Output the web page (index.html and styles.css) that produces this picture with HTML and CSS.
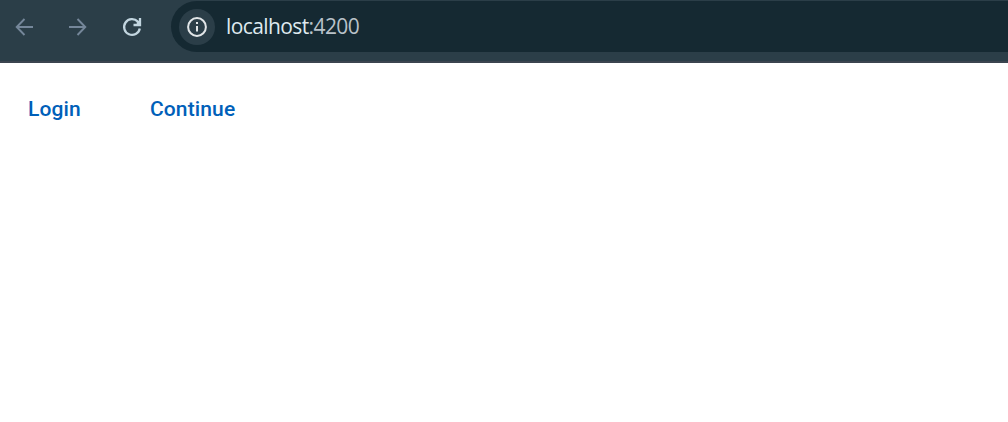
FILE: index.html
```html
<!DOCTYPE html>
<html lang="en">

<head>
    <meta charset="UTF-8">
    <meta name="viewport" content="width=device-width, initial-scale=1.0">
    <title>localhost:4200</title>
    <link rel="stylesheet" href="styles.css">
</head>

<body>
    <header class="toolbar">
        <nav class="nav">
            <svg class="icon arrow" viewBox="0 0 24 24">
                <path d="M21 12H4.9M12.5 4L4.7 12l7.8 8" />
            </svg>
            <svg class="icon arrow" viewBox="0 0 24 24">
                <path d="M3 12h16.1M11.5 4l7.8 8-7.8 8" />
            </svg>
            <svg class="icon reload" viewBox="0 0 24 24">
                <path d="M19.8 13.5A7.9 7.9 0 1 1 17.8 6.6L19.5 8.5" />
                <path d="M20 3v7h-6.5M17.2 7.2L19.5 9.5" />
            </svg>
        </nav>
        <div class="address">
            <span class="info">
                <svg class="info-icon" viewBox="0 0 22 22">
                    <circle cx="11" cy="11" r="8.9" />
                    <path d="M11 10v5.5M11 6v2" />
                </svg>
            </span>
            <span class="url"><span class="host">localhost</span>:4200</span>
        </div>
    </header>
    <main class="content">
        <button class="button">Login</button>
        <button class="button">Continue</button>
    </main>
</body>

</html>
```

FILE: styles.css
```css
body {
    margin: 0;
    background-color: #fff;
}

.toolbar {
    display: flex;
    box-sizing: border-box;
    height: 63px;
    padding-top: 1px;
    border-bottom: 2px solid #3b444f;
    background-color: #2b3e48;
}

.nav {
    display: flex;
    flex: none;
    gap: 30px;
    box-sizing: border-box;
    width: 171px;
    padding: 14px 0 0 12px;
}

.icon {
    width: 24px;
    height: 24px;
    fill: none;
}

.arrow {
    stroke: #75879a;
    stroke-width: 1.9;
}

.reload {
    stroke: #c2d5df;
    stroke-width: 2.3;
}

.address {
    display: flex;
    flex: 1;
    align-items: center;
    box-sizing: border-box;
    height: 51px;
    padding-left: 8px;
    border-radius: 26px 0 0 26px;
    background-color: #152932;
}

.info {
    display: flex;
    align-items: center;
    justify-content: center;
    width: 36px;
    height: 36px;
    border-radius: 50%;
    background-color: #2b3e48;
}

.info-icon {
    width: 22px;
    height: 22px;
    fill: none;
    stroke: #e2e6e8;
    stroke-width: 2;
}

.url {
    margin-left: 11px;
    padding-bottom: 2px;
    color: #b9c2c9;
    font-family: "Open Sans", "Noto Sans", sans-serif;
    font-size: 21px;
    line-height: 28px;
    letter-spacing: -0.6px;
}

.host {
    color: #dfe9ef;
}

.content {
    display: flex;
    gap: 33px;
    padding: 19px 10px;
}

.button {
    height: 54px;
    padding: 0 18px;
    border: 0;
    background-color: transparent;
    color: #0060b9;
    font-family: Roboto, sans-serif;
    font-size: 21px;
    font-weight: 500;
    letter-spacing: 0.14px;
}
```
